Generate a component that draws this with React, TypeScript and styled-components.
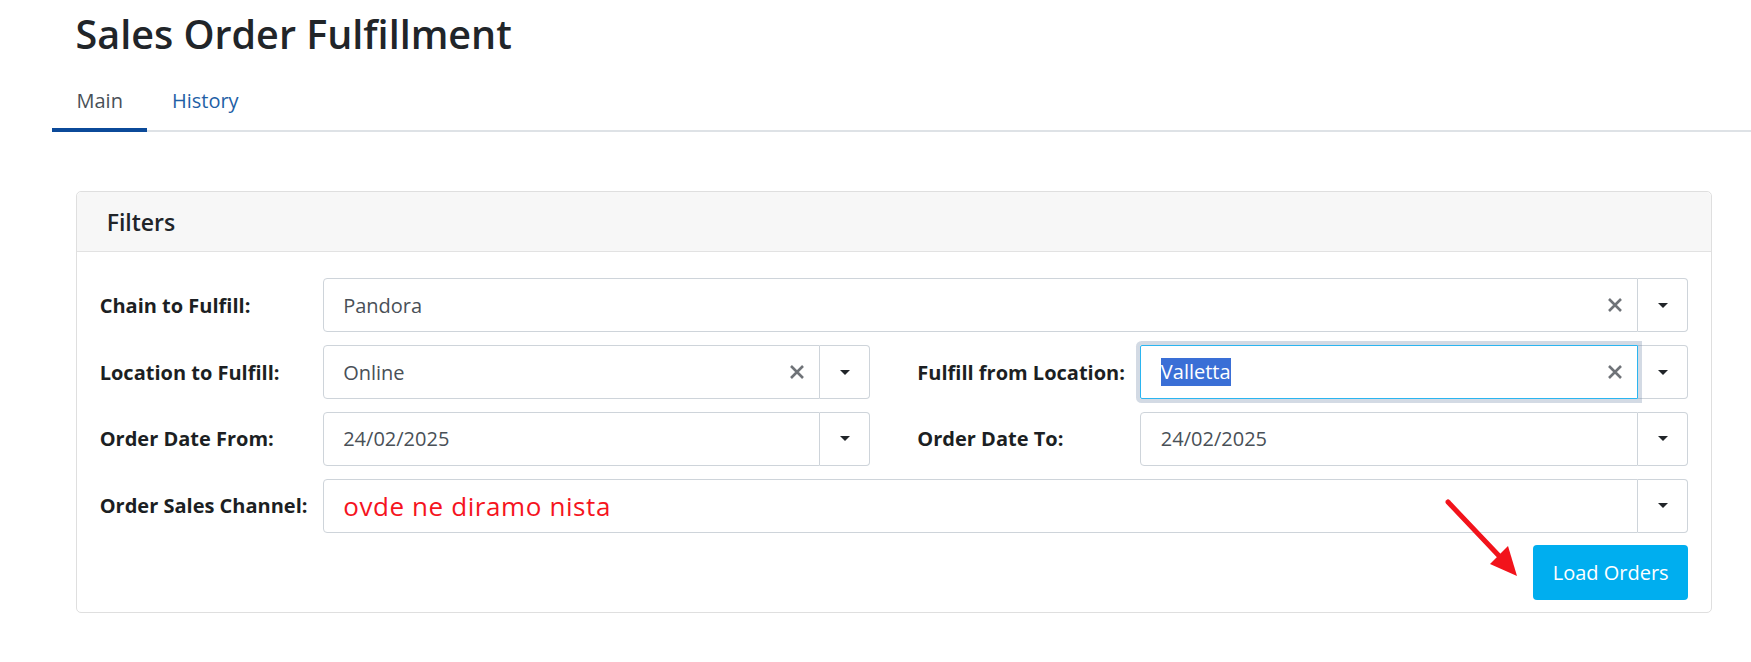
import React from "react";
import styled, { createGlobalStyle } from "styled-components";

const GlobalStyle = createGlobalStyle`
  html, body { margin: 0; padding: 0; background: #ffffff; }
  body { font-family: "Open Sans", "Noto Sans", "Liberation Sans", sans-serif; color: #212529; }
  *, *::before, *::after { box-sizing: border-box; }
`;

const Page = styled.div`
  position: relative;
  width: 1751px;
  min-height: 662px;
  padding-top: 10px;
`;

const Title = styled.h1`
  margin: 0 0 0 75.5px;
  font-size: 39.5px;
  line-height: 48px;
  font-weight: 600;
  color: #212529;
`;

const TabBar = styled.nav`
  display: flex;
  margin: 16px 0 0 52px;
  border-bottom: 2px solid #dee2e6;
`;

const Tab = styled.span<{ $active?: boolean }>`
  padding: 14.5px 24.5px 15.2px;
  margin-bottom: -2px;
  font-size: 20px;
  line-height: 24px;
  color: ${(p) => (p.$active ? "#495057" : "#1f5fa6")};
  border-bottom: 4px solid ${(p) => (p.$active ? "#0b4a99" : "transparent")};
  cursor: pointer;
`;

const Content = styled.main`
  padding: 59.3px 39px 0 75.7px;
`;

const Card = styled.section`
  border: 1px solid #dfdfdf;
  border-radius: 5px;
  background: #ffffff;
`;

const CardHeader = styled.header`
  background: #f7f7f7;
  border-bottom: 1px solid #e2e2e2;
  border-radius: 5px 5px 0 0;
  padding: 16px 30px 15px;
  font-size: 23px;
  line-height: 28px;
  font-weight: 600;
  color: #212529;
`;

const CardBody = styled.div`
  padding: 26.5px 23px 12px;
  display: flex;
  flex-direction: column;
  gap: 12.7px;
`;

const FieldRow = styled.div`
  display: grid;
  grid-template-columns: 1fr 1fr;
  column-gap: 47px;
`;

const Field = styled.div<{ $full?: boolean }>`
  display: grid;
  grid-template-columns: 223px 1fr;
  align-items: center;
  grid-column: ${(p) => (p.$full ? "1 / -1" : "auto")};
`;

const Label = styled.label`
  font-size: 20px;
  font-weight: 700;
  color: #1c1f23;
  white-space: nowrap;
`;

const SelectGroup = styled.div`
  display: flex;
  height: 54px;
`;

const ValueBox = styled.div<{ $focused?: boolean }>`
  flex: 1;
  min-width: 0;
  display: flex;
  align-items: center;
  padding: 0 14px 0 19.5px;
  border: 1px solid ${(p) => (p.$focused ? "#2bb5f0" : "#ced4da")};
  border-radius: ${(p) => (p.$focused ? "2px 0 0 2px" : "4px 0 0 4px")};
  box-shadow: ${(p) => (p.$focused ? "0 0 0 4px rgba(118, 140, 172, 0.32)" : "none")};
  position: relative;
  z-index: ${(p) => (p.$focused ? 1 : 0)};
  font-size: 20px;
  color: #495057;
`;

const ValueText = styled.span`
  flex: 1;
  white-space: nowrap;
  overflow: hidden;
`;

const Selected = styled.span`
  background: #3a6fd6;
  color: #ffffff;
  display: inline-block;
  line-height: 28px;
`;

const Annotation = styled.span`
  flex: 1;
  font-size: 26px;
  letter-spacing: 0.6px;
  color: #f5141e;
  white-space: nowrap;
`;

const ClearIcon = styled.svg`
  width: 16px;
  height: 16px;
  flex: none;
`;

const DropButton = styled.div`
  width: 50px;
  flex: none;
  display: flex;
  align-items: center;
  justify-content: center;
  border: 1px solid #ced4da;
  border-left: none;
  border-radius: 0 4px 4px 0;
`;

const Caret = styled.svg`
  width: 10px;
  height: 5px;
`;

const Actions = styled.div`
  display: flex;
  justify-content: flex-end;
`;

const LoadButton = styled.button`
  width: 154.7px;
  height: 54.3px;
  background: #00aeef;
  color: #ffffff;
  border: none;
  border-radius: 4px;
  font-family: inherit;
  font-size: 20px;
  cursor: pointer;
`;

const ArrowOverlay = styled.svg`
  position: absolute;
  left: 1440px;
  top: 494px;
  width: 85px;
  height: 90px;
  pointer-events: none;
`;

const Clear = () => (
  <ClearIcon viewBox="0 0 16 16">
    <path d="M2 2 L14 14 M14 2 L2 14" stroke="#6f7378" strokeWidth="2.6" strokeLinecap="butt" />
  </ClearIcon>
);

const Drop = () => (
  <DropButton>
    <Caret viewBox="0 0 10 5">
      <polygon points="0,0 10,0 5,5" fill="#212529" />
    </Caret>
  </DropButton>
);

type SelectProps = {
  children: React.ReactNode;
  clearable?: boolean;
  focused?: boolean;
};

const Select = ({ children, clearable, focused }: SelectProps) => (
  <SelectGroup>
    <ValueBox $focused={focused}>
      {children}
      {clearable && <Clear />}
    </ValueBox>
    <Drop />
  </SelectGroup>
);

export default function App() {
  return (
    <Page>
      <GlobalStyle />
      <Title>Sales Order Fulfillment</Title>
      <TabBar>
        <Tab $active>Main</Tab>
        <Tab>History</Tab>
      </TabBar>
      <Content>
        <Card>
          <CardHeader>Filters</CardHeader>
          <CardBody>
            <FieldRow>
              <Field $full>
                <Label>Chain to Fulfill:</Label>
                <Select clearable>
                  <ValueText>Pandora</ValueText>
                </Select>
              </Field>
            </FieldRow>
            <FieldRow>
              <Field>
                <Label>Location to Fulfill:</Label>
                <Select clearable>
                  <ValueText>Online</ValueText>
                </Select>
              </Field>
              <Field>
                <Label>Fulfill from Location:</Label>
                <Select clearable focused>
                  <ValueText>
                    <Selected>Valletta</Selected>
                  </ValueText>
                </Select>
              </Field>
            </FieldRow>
            <FieldRow>
              <Field>
                <Label>Order Date From:</Label>
                <Select>
                  <ValueText>24/02/2025</ValueText>
                </Select>
              </Field>
              <Field>
                <Label>Order Date To:</Label>
                <Select>
                  <ValueText>24/02/2025</ValueText>
                </Select>
              </Field>
            </FieldRow>
            <FieldRow>
              <Field $full>
                <Label>Order Sales Channel:</Label>
                <Select>
                  <Annotation>ovde ne diramo nista</Annotation>
                </Select>
              </Field>
            </FieldRow>
            <Actions>
              <LoadButton>Load Orders</LoadButton>
            </Actions>
          </CardBody>
        </Card>
      </Content>
      <ArrowOverlay viewBox="0 0 85 90">
        <line x1="8" y1="8" x2="62" y2="65" stroke="#f2131b" strokeWidth="5" strokeLinecap="round" />
        <polygon points="77,82 50,70 68,52" fill="#f2131b" />
      </ArrowOverlay>
    </Page>
  );
}
